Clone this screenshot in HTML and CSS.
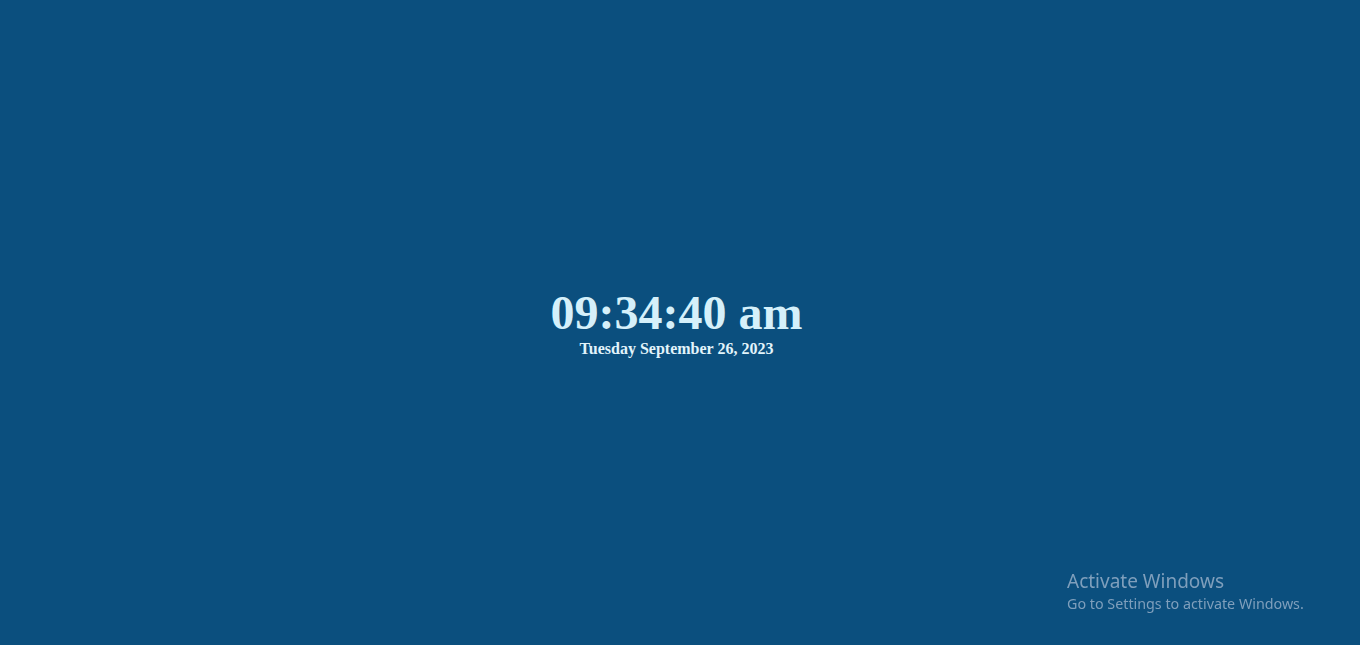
FILE: index.html
```html
<!DOCTYPE html>
<html lang="en">
<head>
<meta charset="utf-8">
<title>Clock</title>
<link rel="stylesheet" href="styles.css">
</head>
<body>
<main class="clock">
  <h1 class="clock-time">09:34:40 am</h1>
  <p class="clock-date">Tuesday September 26, 2023</p>
</main>
<div class="activate">
  <div class="activate-title">Activate Windows</div>
  <div class="activate-sub">Go to Settings to activate Windows.</div>
</div>
</body>
</html>
```
FILE: styles.css
```css
html, body {
  margin: 0;
  padding: 0;
  height: 100%;
}
body {
  background: #0b4f7e;
  font-family: "Liberation Serif", "Times New Roman", serif;
  overflow: hidden;
}
.clock {
  height: 100%;
  box-sizing: border-box;
  padding: 0 7px 2px 0;
  display: flex;
  flex-direction: column;
  align-items: center;
  justify-content: center;
}
.clock-time {
  margin: 0;
  font-size: 48px;
  font-weight: bold;
  line-height: normal;
  color: #d5f0fa;
}
.clock-date {
  margin: 0;
  font-size: 16px;
  font-weight: bold;
  line-height: normal;
  color: #e2f4fb;
}
.activate {
  position: fixed;
  left: 1067px;
  top: 568px;
  font-family: "Noto Sans", "Open Sans", sans-serif;
  color: #7f9fbc;
}
.activate-title {
  font-size: 19px;
  line-height: 26px;
}
.activate-sub {
  font-size: 14.3px;
  line-height: 20px;
}
```
